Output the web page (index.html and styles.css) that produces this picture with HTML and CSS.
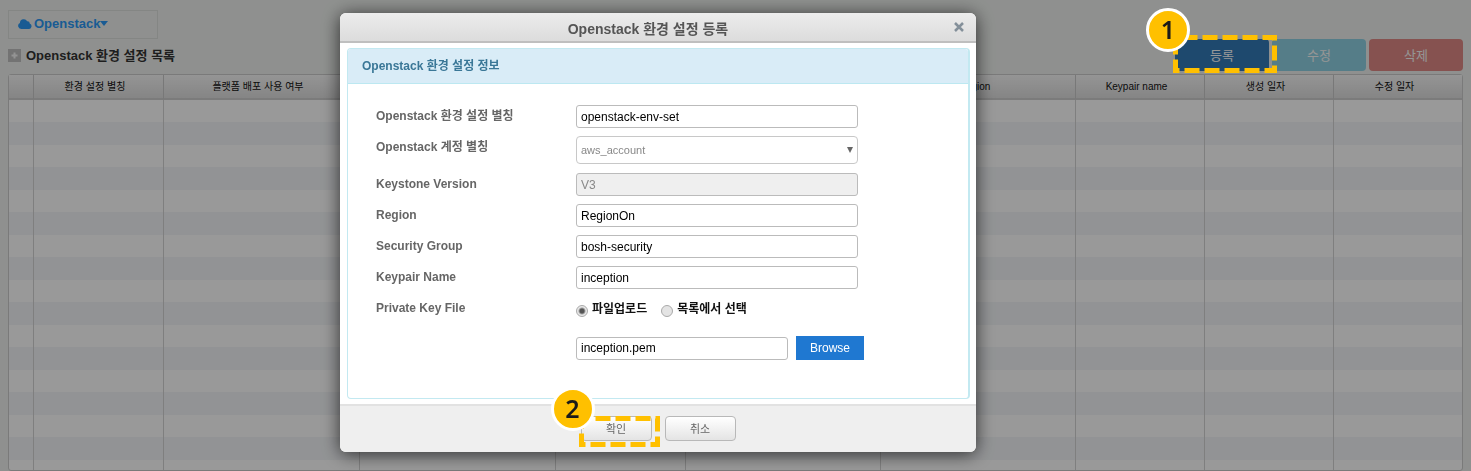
FILE: index.html
```html
<!DOCTYPE html>
<html lang="ko">
<head>
<meta charset="utf-8">
<title>Openstack 환경 설정</title>
<link rel="stylesheet" href="styles.css">
</head>
<body>
<main class="page">
  <button type="button" class="iaas-menu">
    <svg class="cloud" viewBox="0 0 14 10" aria-hidden="true"><path d="M3.2 10A3.1 3.1 0 0 1 1.9 4.1 3.9 3.9 0 0 1 9.2 2.2 2.3 2.3 0 0 1 11.7 4.6 2.8 2.8 0 0 1 11.2 10Z"/></svg>
    <span>Openstack</span>
    <svg class="caret" viewBox="0 0 8 5" aria-hidden="true"><path d="M0 0H8L4 5Z"/></svg>
  </button>
  <div class="toolbar">
    <h1 class="page-title">
      <svg class="plus" viewBox="0 0 13 13" aria-hidden="true"><path class="plus-box" d="M0 0H13V13H0Z"/><path class="plus-sign" d="M6.500 3.500V9.500M3.500 6.500H9.500"/></svg>
      <span>Openstack 환경 설정 목록</span>
    </h1>
    <div class="actions">
      <button type="button" class="action primary">등록</button>
      <button type="button" class="action info" disabled>수정</button>
      <button type="button" class="action danger" disabled>삭제</button>
    </div>
  </div>
  <table class="grid">
    <colgroup>
      <col class="c-num"><col class="c-mid"><col class="c-wide"><col class="c-wide"><col class="c-mid"><col class="c-group"><col class="c-group"><col class="c-date"><col class="c-date"><col>
    </colgroup>
    <thead>
      <tr><th></th><th>환경 설정 별칭</th><th>플랫폼 배포 사용 여부</th><th></th><th></th><th></th><th>Region</th><th>Keypair name</th><th>생성 일자</th><th>수정 일자</th></tr>
    </thead>
    <tbody>
      <tr><td></td><td></td><td></td><td></td><td></td><td></td><td></td><td></td><td></td><td></td></tr>
      <tr><td></td><td></td><td></td><td></td><td></td><td></td><td></td><td></td><td></td><td></td></tr>
      <tr><td></td><td></td><td></td><td></td><td></td><td></td><td></td><td></td><td></td><td></td></tr>
      <tr><td></td><td></td><td></td><td></td><td></td><td></td><td></td><td></td><td></td><td></td></tr>
      <tr><td></td><td></td><td></td><td></td><td></td><td></td><td></td><td></td><td></td><td></td></tr>
      <tr><td></td><td></td><td></td><td></td><td></td><td></td><td></td><td></td><td></td><td></td></tr>
      <tr><td></td><td></td><td></td><td></td><td></td><td></td><td></td><td></td><td></td><td></td></tr>
      <tr><td></td><td></td><td></td><td></td><td></td><td></td><td></td><td></td><td></td><td></td></tr>
      <tr><td></td><td></td><td></td><td></td><td></td><td></td><td></td><td></td><td></td><td></td></tr>
      <tr><td></td><td></td><td></td><td></td><td></td><td></td><td></td><td></td><td></td><td></td></tr>
      <tr><td></td><td></td><td></td><td></td><td></td><td></td><td></td><td></td><td></td><td></td></tr>
      <tr><td></td><td></td><td></td><td></td><td></td><td></td><td></td><td></td><td></td><td></td></tr>
      <tr><td></td><td></td><td></td><td></td><td></td><td></td><td></td><td></td><td></td><td></td></tr>
      <tr><td></td><td></td><td></td><td></td><td></td><td></td><td></td><td></td><td></td><td></td></tr>
      <tr><td></td><td></td><td></td><td></td><td></td><td></td><td></td><td></td><td></td><td></td></tr>
      <tr><td></td><td></td><td></td><td></td><td></td><td></td><td></td><td></td><td></td><td></td></tr>
      <tr class="last"><td></td><td></td><td></td><td></td><td></td><td></td><td></td><td></td><td></td><td></td></tr>
    </tbody>
  </table>
</main>

<div class="overlay">
  <div class="marker marker-register">
    <svg class="dashes" aria-hidden="true"><rect x="2.500" y="2.500" width="99" height="33" stroke-dashoffset="13"/></svg>
    <span class="badge badge-large">1</span>
  </div>
  <section class="modal" role="dialog" aria-labelledby="modal-title">
    <header class="modal-head">
      <h2 id="modal-title">Openstack 환경 설정 등록</h2>
      <button type="button" class="close" aria-label="닫기"><svg viewBox="0 0 10 10" aria-hidden="true"><path d="M1 1L9 9M9 1L1 9"/></svg></button>
    </header>
    <form class="modal-body">
      <div class="panel">
        <h3 class="panel-head">Openstack 환경 설정 정보</h3>
        <div class="fields">
          <label for="alias">Openstack 환경 설정 별칭</label>
          <input id="alias" class="box" type="text" value="openstack-env-set">
          <label for="account">Openstack 계정 별칭</label>
          <div class="select-wrap">
            <select id="account" class="box"><option>aws_account</option></select>
            <svg class="arrow" viewBox="0 0 6 6" aria-hidden="true"><path d="M0 0H6L3 6Z"/></svg>
          </div>
          <label for="version">Keystone Version</label>
          <input id="version" class="box" type="text" value="V3" disabled>
          <label for="region">Region</label>
          <input id="region" class="box" type="text" value="RegionOn">
          <label for="security">Security Group</label>
          <input id="security" class="box" type="text" value="bosh-security">
          <label for="keypair">Keypair Name</label>
          <input id="keypair" class="box" type="text" value="inception">
          <label for="upload">Private Key File</label>
          <div class="radios">
            <input id="upload" type="radio" name="key" checked><label for="upload">파일업로드</label>
            <input id="list" type="radio" name="key"><label for="list">목록에서 선택</label>
          </div>
          <div class="file">
            <input class="box" type="text" value="inception.pem" aria-label="Private Key File">
            <button type="button" class="browse">Browse</button>
          </div>
        </div>
      </div>
    </form>
    <footer class="modal-foot">
      <div class="confirm">
        <button type="button" class="foot-btn">확인</button>
        <div class="marker marker-confirm">
          <svg class="dashes" aria-hidden="true"><rect x="2.500" y="2.500" width="76" height="26" stroke-dashoffset="6"/></svg>
          <span class="badge">2</span>
        </div>
      </div>
      <button type="button" class="foot-btn">취소</button>
    </footer>
  </section>
</div>
</body>
</html>
```

FILE: styles.css
```css
* {
  box-sizing: border-box;
}

body,
button,
input,
select {
  font-family: "Liberation Sans", "Noto Sans CJK KR", sans-serif;
}

body {
  margin: 0;
  background: #eef1ee;
  color: #333;
  font-size: 12px;
}

h1,
h2,
h3 {
  margin: 0;
}

.page {
  padding: 10px 8px 0;
}

.iaas-menu {
  display: flex;
  align-items: center;
  gap: 2px;
  width: 150px;
  height: 29px;
  padding: 0 9px 2px;
  border: 1px solid #dde0dd;
  background: none;
  color: #2b98f5;
  font-size: 13px;
  font-weight: bold;
}

.iaas-menu svg {
  fill: currentColor;
}

.cloud {
  width: 14px;
  height: 10px;
}

.caret {
  width: 8px;
  height: 5px;
  margin-left: -2px;
}

.toolbar {
  display: flex;
  justify-content: space-between;
  height: 35px;
}

.page-title {
  display: flex;
  align-items: center;
  gap: 5px;
  height: 33px;
  font-size: 13px;
  line-height: 20px;
}

.plus {
  width: 13px;
  height: 13px;
}

.plus-box {
  fill: #c0c0c0;
}

.plus-sign {
  stroke: #f6f6f6;
  stroke-width: 2;
}

.actions {
  display: flex;
  gap: 3px;
  height: 32px;
}

.action {
  width: 94px;
  padding: 0 0 2px;
  border: 0;
  border-radius: 4px;
  color: #fff;
  font-size: 13px;
}

.action:disabled {
  opacity: 0.65;
}

.primary {
  background: #337ab7;
}

.info {
  background: #5bc0de;
}

.danger {
  background: #d9534f;
}

.grid {
  width: 100%;
  table-layout: fixed;
  border: 1px solid #cbcbcb;
  border-radius: 3px;
  border-spacing: 0;
  background: #fff;
}

.c-num {
  width: 25px;
}

.c-mid {
  width: 130px;
}

.c-wide {
  width: 196px;
}

.c-group {
  width: 195px;
}

.c-date {
  width: 129px;
}

.grid th {
  height: 25px;
  padding: 0 7px 0 0;
  border-right: 1px solid #c8c8c8;
  border-bottom: 2px solid #cdcdcd;
  background: linear-gradient(#f8f8f8, #dedede);
  color: #111;
  font-size: 10px;
  font-weight: normal;
  line-height: 16px;
  white-space: nowrap;
}

.grid td {
  height: 22px;
  padding: 0;
  border-right: 1px solid #d4d4d4;
}

.grid th:last-child,
.grid td:last-child {
  border-right: 0;
}

.grid tr:nth-child(even) td {
  height: 23px;
  background: #f4f6f9;
}

.grid .last td {
  height: 10px;
}

.overlay {
  position: fixed;
  inset: 0;
  padding: 13px 0 0 340px;
  background: rgba(0, 0, 0, 0.4);
}

.modal {
  width: 636px;
  border-radius: 6px;
  background: #fff;
  box-shadow: 0 2px 18px rgba(0, 0, 0, 0.7);
}

.modal-head {
  display: grid;
  grid-template-columns: 1fr 20px;
  align-items: center;
  height: 30px;
  padding: 0 7px;
  border-bottom: 2px solid #bfbfbf;
  border-radius: 6px 6px 0 0;
  background: linear-gradient(#ececec, #dcdcdc);
}

.modal-head h2 {
  padding-top: 3px;
  color: #555;
  font-size: 14px;
  line-height: 24px;
  text-align: center;
}

.close {
  display: grid;
  place-items: center;
  height: 20px;
  padding: 0;
  border: 0;
  background: none;
}

.close svg {
  width: 10px;
  height: 10px;
  fill: none;
  stroke: #84909a;
  stroke-width: 2.5;
}

.modal-body {
  padding: 5px 6px 5px 7px;
}

.panel {
  border: 1px solid #c3e9f1;
  border-right-width: 2px;
  border-radius: 4px;
}

.panel-head {
  padding: 7px 14px;
  border-bottom: 1px solid #bce8f1;
  border-radius: 3px 3px 0 0;
  background: #d9ecf7;
  color: #3a7797;
  font-size: 12px;
  line-height: 20px;
}

.fields {
  display: grid;
  grid-template-columns: 200px 1fr;
  row-gap: 8px;
  padding: 21px 105px 38px 28px;
}

.fields > label {
  color: #666;
  font-weight: bold;
  line-height: 23px;
}

.box {
  width: 282px;
  height: 23px;
  padding: 0 4px;
  border: 1px solid #bbb;
  border-radius: 3px;
  background: #fff;
  color: #000;
  font-size: 12px;
}

.box:disabled {
  background: #efefef;
  color: #888;
}

.select-wrap {
  position: relative;
  width: 282px;
  height: 29px;
}

.select-wrap .box {
  height: 28px;
  appearance: none;
  border-color: #c8c8c8;
  border-radius: 4px;
  color: #888;
  font-size: 11px;
}

.arrow {
  position: absolute;
  top: 11px;
  right: 5px;
  width: 6px;
  height: 6px;
  fill: #666;
  pointer-events: none;
}

.radios {
  display: flex;
  align-items: center;
  height: 23px;
}

.radios input {
  width: 12px;
  height: 12px;
  margin: 4px 4px 0 0;
  appearance: none;
  border: 1px solid #aaa;
  border-radius: 50%;
  background: #e4e4e4;
}

.radios input:checked {
  background: radial-gradient(circle, #555 0 2px, #e8e8e8 4px);
}

.radios label {
  margin-right: 14px;
  padding-bottom: 2px;
  color: #111;
  font-weight: bold;
}

.file {
  display: flex;
  grid-column: 2;
  align-items: center;
  gap: 8px;
  margin-top: 8px;
}

.file .box {
  width: 212px;
}

.browse {
  width: 68px;
  height: 24px;
  padding: 0;
  border: 0;
  background: #1f78d1;
  color: #fff;
  font-size: 12px;
}

.modal-foot {
  display: flex;
  justify-content: center;
  gap: 13px;
  height: 48px;
  padding-top: 10px;
  border-top: 2px solid #e2e2e2;
  border-radius: 0 0 6px 6px;
  background: #efefef;
}

.confirm {
  position: relative;
}

.foot-btn {
  width: 71px;
  height: 25px;
  padding: 0 0 2px;
  border: 1px solid #b8b8b8;
  border-radius: 4px;
  background: linear-gradient(#fff, #e4e4e4);
  color: #666;
  font-size: 11px;
}

.marker {
  position: absolute;
  pointer-events: none;
}

.marker-register {
  top: 35px;
  right: 194px;
  width: 104px;
  height: 38px;
}

.marker-confirm {
  top: 0;
  left: -2px;
  width: 81px;
  height: 31px;
}

.dashes {
  display: block;
  width: 100%;
  height: 100%;
  fill: none;
  stroke: #ffc000;
  stroke-width: 5;
  stroke-dasharray: 15 5;
}

.badge {
  position: absolute;
  top: -29px;
  left: -28px;
  width: 44px;
  height: 44px;
  border: 3px solid #fff;
  border-radius: 50%;
  background: #ffc000;
  color: #1a1a1a;
  font-family: "Noto Sans", sans-serif;
  font-size: 25px;
  font-weight: 600;
  line-height: 36px;
  text-align: center;
}

.badge-large {
  top: -27px;
  left: -27px;
}
```
